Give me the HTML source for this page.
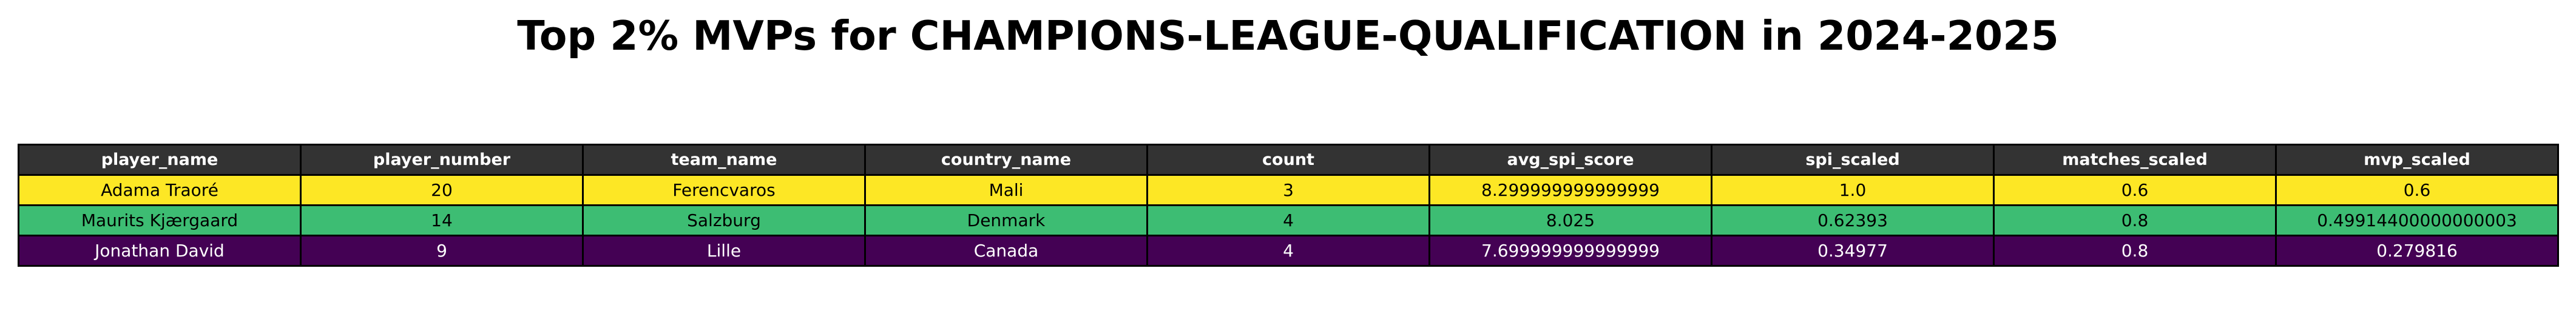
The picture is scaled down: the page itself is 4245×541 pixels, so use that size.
<!DOCTYPE html><html><head><meta charset="utf-8"><style>
body{margin:0;width:4245px;height:541px;background:#fff;position:relative;overflow:hidden;font-family:"DejaVu Sans","Liberation Sans",sans-serif}
.t{position:absolute;left:0;width:4245px;top:14px;text-align:center;font-weight:bold;font-size:66.5px;line-height:90px;color:#000}
table{position:absolute;left:29px;top:237px;width:4188px;border-collapse:collapse;table-layout:fixed}
td{border:3px solid #000;height:47px;padding:0;text-align:center;font-size:28px;white-space:nowrap;overflow:hidden}
.h td{background:#333;color:#fff;font-weight:bold;font-size:27px}
.y td{background:#fde725;color:#000}
.g td{background:#3dbd73;color:#000}
.p td{background:#440154;color:#fff}
</style></head><body>
<div class="t">Top 2% MVPs for CHAMPIONS-LEAGUE-QUALIFICATION in 2024-2025</div>
<table>
<tr class="h"><td>player_name</td><td>player_number</td><td>team_name</td><td>country_name</td><td>count</td><td>avg_spi_score</td><td>spi_scaled</td><td>matches_scaled</td><td>mvp_scaled</td></tr>
<tr class="y"><td>Adama Traoré</td><td>20</td><td>Ferencvaros</td><td>Mali</td><td>3</td><td>8.299999999999999</td><td>1.0</td><td>0.6</td><td>0.6</td></tr>
<tr class="g"><td>Maurits Kjærgaard</td><td>14</td><td>Salzburg</td><td>Denmark</td><td>4</td><td>8.025</td><td>0.62393</td><td>0.8</td><td>0.49914400000000003</td></tr>
<tr class="p"><td>Jonathan David</td><td>9</td><td>Lille</td><td>Canada</td><td>4</td><td>7.699999999999999</td><td>0.34977</td><td>0.8</td><td>0.279816</td></tr>
</table>
</body></html>
